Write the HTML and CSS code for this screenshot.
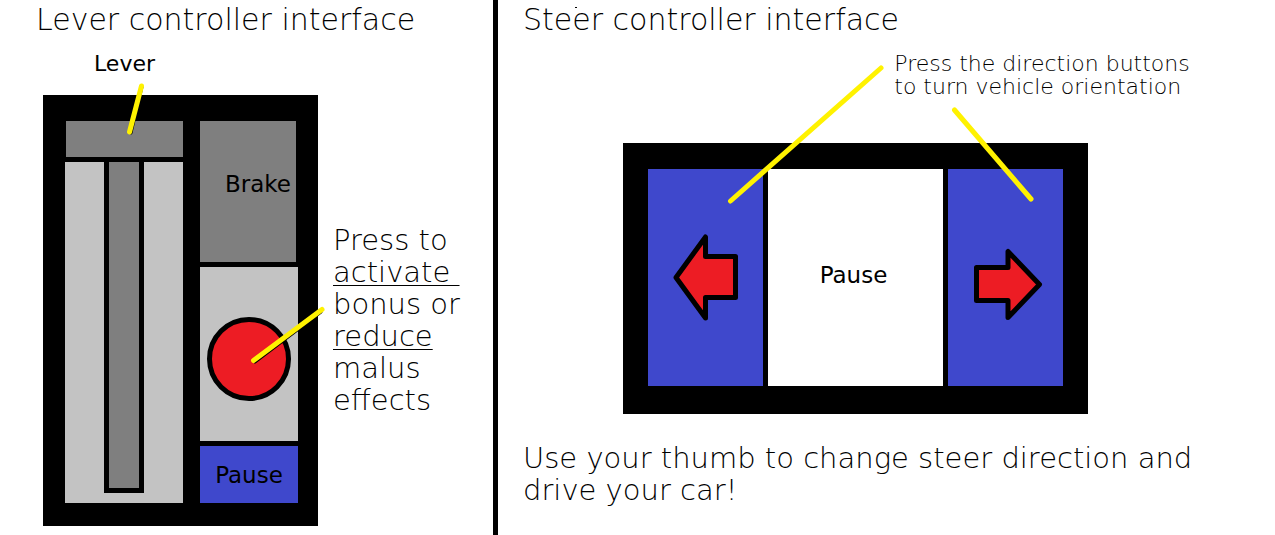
FILE: index.html
```html
<!DOCTYPE html>
<html lang="en">
<head>
<meta charset="utf-8">
<title>Controller interfaces</title>
<link rel="stylesheet" href="styles.css">
</head>
<body>
<main class="page">
  <section class="lever-section">
    <h1 class="title">Lever controller interface</h1>
    <p class="lever-label">Lever</p>
    <div class="lever-row">
      <div class="device lever-device">
        <div class="lever-column">
          <div class="lever-head"></div>
          <div class="lever-track"><div class="lever-slot"></div></div>
        </div>
        <div class="button-column">
          <button class="key brake" type="button">Brake</button>
          <div class="bonus-area"><button class="bonus" type="button" aria-label="Bonus"></button></div>
          <button class="key pause-small" type="button">Pause</button>
        </div>
        <svg class="pointers" viewBox="0 0 275 431" preserveAspectRatio="none" aria-hidden="true">
          <path class="pointer-shadow" d="M99 -8L88 38M278 217L212 267"/>
          <path class="pointer" d="M98.500 -9L86.500 37M279 214.500L210.500 265.500"/>
        </svg>
      </div>
      <p class="text bonus-note">Press to<br><u>activate&nbsp;</u><br>bonus or<br><u>reduce</u><br>malus<br>effects</p>
    </div>
  </section>
  <section class="steer-section">
    <h1 class="title">Steer controller interface</h1>
    <div class="note-row">
      <p class="note">Press the direction buttons<br>to turn vehicle orientation</p>
    </div>
    <div class="steer-row">
      <div class="device steer-device">
        <button class="key direction" type="button" aria-label="Turn left">
          <svg class="arrow" viewBox="0 0 115 217" aria-hidden="true"><path d="M28 108.500L57.500 68V87.500H87.500V128.500H57.500V149Z"/></svg>
        </button>
        <button class="key pause-wide" type="button">Pause</button>
        <button class="key direction" type="button" aria-label="Turn right">
          <svg class="arrow" viewBox="0 0 115 217" aria-hidden="true"><path d="M91.500 115.500L60 82.500V98.500H28.500V131.500H60V148.500Z"/></svg>
        </button>
        <svg class="pointers" viewBox="0 0 465 271" preserveAspectRatio="none" aria-hidden="true">
          <path class="pointer" d="M258 -75L107.500 58M331.500 -33L408 56"/>
          <path class="speck" d="M-48 -135.500h2"/>
        </svg>
      </div>
    </div>
    <p class="text usage">Use your thumb to change steer direction and<br>drive your car!</p>
  </section>
</main>
</body>
</html>
```
FILE: styles.css
```css
* { box-sizing: border-box; }

body {
  margin: 0;
  background: #fff;
  color: #000;
  font-family: "DejaVu Sans", sans-serif;
  font-weight: 200;
}

h1, p { margin: 0; }

.page {
  display: grid;
  grid-template-columns: minmax(0, 493fr) minmax(0, 782fr);
  min-height: 100vh;
}

.title, .text {
  font-weight: 200;
  line-height: 32px;
  white-space: nowrap;
}

.title {
  padding-top: 4px;
  font-size: 30px;
}

.text { font-size: 29px; }

.lever-section .title { padding-left: 36px; }

.lever-label {
  margin: 16px 0 19px 94px;
  font-size: 22px;
  font-weight: 400;
  line-height: 24px;
}

.lever-row {
  display: grid;
  grid-template-columns: minmax(0, 275fr) minmax(0, 160fr);
  column-gap: 15px;
  align-items: center;
  padding-left: 43px;
}

.device {
  position: relative;
  display: grid;
  background: #000;
}

.lever-device {
  grid-template-columns: minmax(0, 118fr) minmax(0, 98fr);
  column-gap: 17px;
  padding: 26px 20px 23px 22px;
}

.lever-column, .button-column {
  display: flex;
  flex-direction: column;
  gap: 5px;
}

.lever-head {
  height: 36px;
  border-left: 1px solid #000;
  background: #7f7f7f;
}

.lever-track {
  display: flex;
  justify-content: center;
  padding-bottom: 10px;
  background: #c3c3c3;
}

.lever-slot {
  width: 40px;
  height: 331px;
  border: 5px solid #000;
  border-top: 0;
  background: #7f7f7f;
}

.key {
  margin: 0;
  padding: 0;
  border: 0;
  border-radius: 0;
  color: #000;
  font-family: inherit;
  font-size: 23px;
  font-weight: 400;
  line-height: 24px;
}

.brake {
  height: 141px;
  padding: 0 5px 16px 0;
  border-right: 2px solid #000;
  background: #7f7f7f;
  text-align: right;
}

.bonus-area {
  display: flex;
  flex: 1;
  align-items: center;
  justify-content: center;
  padding-top: 10px;
  background: #c3c3c3;
}

.bonus {
  width: 84px;
  height: 84px;
  padding: 0;
  border: 5px solid #000;
  border-radius: 50%;
  background: #ed1c24;
}

.pause-small {
  height: 57px;
  background: #3f48cc;
}

.pointers {
  position: absolute;
  inset: 0;
  width: 100%;
  height: 100%;
  overflow: visible;
  pointer-events: none;
}

.pointer, .pointer-shadow {
  fill: none;
  stroke: #fff200;
  stroke-width: 5;
  stroke-linecap: round;
  vector-effect: non-scaling-stroke;
}

.pointer-shadow {
  stroke: #000;
  stroke-width: 3;
}

.speck {
  stroke: #000;
  stroke-width: 1;
}

.bonus-note { padding-top: 18px; }

.bonus-note u {
  text-decoration-thickness: 1px;
  text-underline-offset: 3px;
  text-decoration-skip-ink: none;
}

.steer-section { border-left: 5px solid #000; }

.steer-section .title, .usage { padding-left: 25px; }

.note-row { padding: 16px 0 45px 51%; }

.note {
  font-size: 22px;
  line-height: 23px;
  white-space: nowrap;
}

.steer-row {
  display: grid;
  grid-template-columns: minmax(0, 125fr) minmax(0, 465fr) minmax(0, 187fr);
}

.steer-device {
  grid-column: 2;
  grid-template-columns: minmax(0, 115fr) minmax(0, 175fr) minmax(0, 115fr);
  column-gap: 5px;
  padding: 26px 25px 28px;
}

.direction {
  height: 217px;
  background: #3f48cc;
}

.pause-wide {
  padding: 0 4px 6px 0;
  background: #fff;
}

.arrow {
  display: block;
  width: 100%;
  height: 100%;
}

.arrow path {
  fill: #ed1c24;
  stroke: #000;
  stroke-width: 5;
  stroke-linejoin: round;
}

.usage { padding-top: 28px; }
```
